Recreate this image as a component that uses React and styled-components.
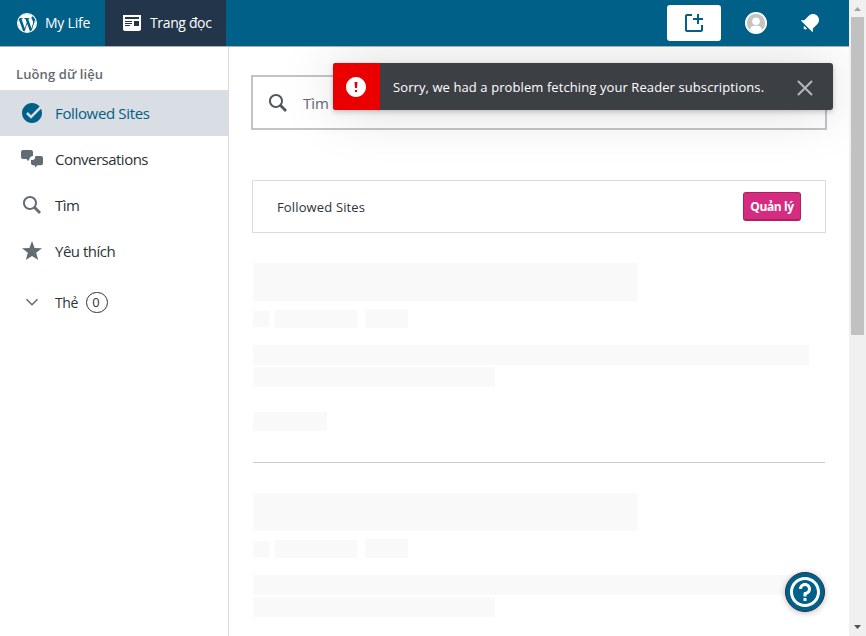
import React from 'react';
import styled, { createGlobalStyle } from 'styled-components';

const GlobalStyle = createGlobalStyle`
  * { box-sizing: border-box; }
  body {
    margin: 0;
    overflow: hidden;
    background: #fff;
    color: #2c3338;
    font-family: "Open Sans", "Noto Sans", sans-serif;
  }
`;

const Window = styled.div`
  position: relative;
  display: flex;
  width: 866px;
  height: 636px;
  overflow: hidden;
`;

const Page = styled.div`
  display: flex;
  flex-direction: column;
  width: 849px;
  height: 636px;
`;

const Masterbar = styled.header`
  position: relative;
  z-index: 3;
  display: flex;
  flex: none;
  height: 47px;
  background: #016087;
  border-bottom: 1px solid #a5afb5;
`;

const MasterItem = styled.a`
  display: flex;
  align-items: center;
  width: ${(p) => p.$width}px;
  padding-left: 15px;
  gap: 6px;
  color: #fff;
  background: ${(p) => (p.$active ? '#23354b' : 'transparent')};
`;

const Actions = styled.div`
  display: flex;
  align-items: center;
  margin-left: auto;
  padding-right: 27px;
  color: #fff;
`;

const CreateButton = styled.button`
  display: flex;
  align-items: center;
  justify-content: center;
  width: 54px;
  height: 36px;
  margin-right: 24px;
  padding: 0;
  border: 0;
  border-radius: 3px;
  background: #fff;
  color: #016087;
`;

const Avatar = styled.svg`
  width: 22px;
  height: 22px;
  margin-right: 31px;
`;

const Label = styled.span`
  font-size: ${(p) => p.$size || 14}px;
  font-weight: ${(p) => p.$weight || 400};
  letter-spacing: ${(p) => p.$track || 0}px;
  line-height: 20px;
  white-space: nowrap;
`;

const Body = styled.div`
  display: flex;
  flex: 1;
  min-height: 0;
`;

const Sidebar = styled.nav`
  display: flex;
  flex-direction: column;
  width: 229px;
  border-right: 1px solid #dcdcde;
`;

const SidebarHeading = styled.h2`
  display: flex;
  align-items: center;
  height: 43px;
  margin: 0;
  padding: 11px 0 0 16px;
  color: #646970;
`;

const NavItem = styled.a`
  display: flex;
  align-items: center;
  gap: 11px;
  height: 46px;
  padding-left: 20px;
  background: ${(p) => (p.$selected ? '#d9dde4' : 'transparent')};
  color: ${(p) => (p.$selected ? '#016087' : '#2c3338')};

  svg { color: ${(p) => (p.$selected ? '#016087' : '#626c75')}; }
`;

const TagsItem = styled(NavItem)`
  margin-top: 5px;

  svg { margin: 0 3px; }
  ${Label} { padding-top: 1px; }
`;

const Count = styled.span`
  width: 22px;
  height: 21px;
  margin-left: -3px;
  padding-right: 2px;
  border: 1px solid #2c3338;
  border-radius: 11px;
  font-size: 13px;
  line-height: 19px;
  text-align: center;
`;

const Main = styled.main`
  display: flex;
  flex: 1;
  flex-direction: column;
  padding: 28px 22px 0;
`;

const SearchBox = styled.div`
  display: flex;
  flex: none;
  align-items: center;
  gap: 13px;
  height: 55px;
  padding-left: 13px;
  border: 2px solid #c3c4c7;
  background: #fff;
  color: #50575e;

  ${Label} { color: #646970; }
`;

const SitesCard = styled.section`
  display: flex;
  flex: none;
  align-items: center;
  justify-content: space-between;
  height: 53px;
  margin: 50px 1px 30px;
  padding: 0 24px;
  border: 1px solid #dcdcde;
`;

const ManageButton = styled.button`
  width: 58px;
  height: 29px;
  padding: 2px 0 0;
  border: 1px solid #ab235a;
  border-bottom-width: 2px;
  border-radius: 3px;
  background: #d52c82;
  color: #fff;
  font-family: inherit;
`;

const Post = styled.article`
  display: flex;
  flex: none;
  flex-direction: column;
  height: 200px;
  margin: 0 2px 30px;
  border-bottom: 1px solid #ccc;
`;

const Bone = styled.div`
  flex: none;
  width: ${(p) => p.$w}px;
  height: ${(p) => p.$h}px;
  background: #f9f9f9;
`;

const Byline = styled.div`
  display: flex;
  align-items: flex-end;
  height: 19px;
  margin: 8px 0 17px;

  ${Bone}:nth-child(1) { margin: 0 6px 1px 0; }
  ${Bone}:nth-child(2) { margin-right: 8px; }
`;

const Excerpt = styled.div`
  display: flex;
  flex-direction: column;
  gap: 2px;
  margin-bottom: 25px;
`;

const Notice = styled.div`
  position: absolute;
  z-index: 2;
  top: 63px;
  left: 333px;
  display: flex;
  align-items: center;
  width: 500px;
  height: 47px;
  overflow: hidden;
  border-radius: 3px;
  background: #3c4045;
  color: #fff;
  box-shadow: 0 2px 5px rgba(0, 0, 0, 0.2), 0 0 56px rgba(0, 0, 0, 0.15);
`;

const NoticeStatus = styled.div`
  display: flex;
  align-items: center;
  width: 47px;
  height: 47px;
  margin-right: 13px;
  padding-left: 11px;
  background: #eb0001;
`;

const Dismiss = styled.button`
  display: flex;
  margin: 3px 16px 0 auto;
  padding: 0;
  border: 0;
  background: none;
  color: #b4b7ba;
`;

const HelpButton = styled.button`
  position: absolute;
  z-index: 2;
  top: 572px;
  left: 785px;
  display: flex;
  align-items: center;
  justify-content: center;
  width: 40px;
  height: 40px;
  padding: 0;
  border: 1px solid #23354b;
  border-radius: 50%;
  background: #016087;
  color: #fff;
  box-shadow: 0 1px 6px rgba(0, 0, 0, 0.25);
`;

const Scrollbar = styled.div`
  position: relative;
  z-index: 3;
  display: flex;
  flex-direction: column;
  align-items: center;
  justify-content: space-between;
  width: 17px;
  height: 636px;
  background: #f0f0f0;
`;

const Thumb = styled.div`
  width: 13px;
  height: 318px;
  margin-bottom: auto;
  background: #c1c1c1;
`;

const ScrollArrow = styled.svg`
  display: block;
  width: 17px;
  height: 17px;
  fill: ${(p) => p.$tone};
`;

const paths = {
  wordpress:
    'M12.158 12.786L9.46 20.625c.806.237 1.657.366 2.54.366 1.047 0 2.051-.18 2.986-.51-.024-.038-.046-.079-.065-.124l-2.763-7.571zM3.009 12c0 3.559 2.068 6.634 5.067 8.092L3.788 8.341C3.289 9.459 3.009 10.696 3.009 12zm15.06-.454c0-1.112-.399-1.881-.741-2.48-.456-.741-.883-1.368-.883-2.109 0-.826.627-1.596 1.51-1.596.04 0 .078.005.116.007C16.472 3.904 14.34 3.009 12 3.009c-3.141 0-5.904 1.612-7.512 4.052.211.007.41.011.579.011.94 0 2.396-.114 2.396-.114.484-.028.541.684.057.741 0 0-.487.057-1.029.085l3.274 9.739 1.968-5.901-1.401-3.838c-.484-.028-.943-.085-.943-.085-.485-.029-.428-.769.057-.741 0 0 1.484.114 2.368.114.94 0 2.397-.114 2.397-.114.485-.028.542.684.057.741 0 0-.488.057-1.029.085l3.249 9.665.897-2.996c.456-1.169.684-2.137.684-2.907zm1.82-3.86c.039.286.06.593.06.924 0 .912-.171 1.938-.684 3.22l-2.746 7.94c2.673-1.558 4.47-4.454 4.47-7.771 0-1.563-.399-3.033-1.1-4.313z',
  reader:
    'M3 4v14c0 1.1.9 2 2 2h14c1.1 0 2-.9 2-2V4H3zm7 11H5v-1h5v1zm2-2H5v-1h7v1zm0-2H5v-1h7v1zm7 4h-5v-5h5v5zm0-7H5V6h14v2z',
  create:
    'M21 14v5c0 1.105-.895 2-2 2H5c-1.105 0-2-.895-2-2V5c0-1.105.895-2 2-2h5v2H5v14h14v-5h2zM21 7h-4V3h-2v4h-4v2h4v4h2V9h4V7z',
  bell:
    'M6.14 14.97l2.828 2.827c-.362.362-.862.586-1.414.586-1.105 0-2-.895-2-2 0-.552.224-1.052.586-1.414zm8.867 5.324L14.3 21 3 9.7l.706-.707 1.102.157c.754.108 1.69-.122 2.077-.51l3.885-3.884c2.34-2.34 6.135-2.34 8.475 0s2.34 6.135 0 8.475l-3.885 3.886c-.388.388-.618 1.323-.51 2.077l.157 1.1z',
  check:
    'M11 17.768l-4.884-4.884 1.768-1.768L11 14.232l8.658-8.658C17.823 3.391 15.075 2 12 2 6.477 2 2 6.477 2 12s4.477 10 10 10 10-4.477 10-10c0-1.528-.353-2.974-.966-4.266L11 17.768z',
  chat:
    'M3 3h8a2 2 0 0 1 2 2v3.300c0 .3 0 .5-.1.700-1.900.3-3.100 1.300-3.500 3L8 14.300 6.700 12H3a2 2 0 0 1-2-2V5a2 2 0 0 1 2-2zM15.200 9H21a2 2 0 0 1 2 2v5.300a2 2 0 0 1-2 2h-3.700l-1.800 2.200-1-2.200H13a2 2 0 0 1-2-2V13h1.200c1.800 0 3-1.200 3-3z',
  search:
    'M21 19l-5.154-5.154C16.574 12.742 17 11.42 17 10c0-3.866-3.134-7-7-7s-7 3.134-7 7 3.134 7 7 7c1.42 0 2.742-.426 3.846-1.154L19 21l2-2zM5 10c0-2.757 2.243-5 5-5s5 2.243 5 5-2.243 5-5 5-5-2.243-5-5z',
  star: 'M12 2l2.582 6.953L22 9.257l-5.822 4.602L18.18 21 12 16.89 5.82 21l2.002-7.14L2 9.256l7.418-.304z',
  chevron: 'M20 9l-8 8-8-8 1.414-1.414L12 14.172l6.586-6.586z',
  notice:
    'M12 2C6.477 2 2 6.477 2 12s4.477 10 10 10 10-4.477 10-10S17.523 2 12 2zm1 15h-2v-2h2v2zm0-4h-2l-.5-6h3l-.5 6z',
  cross:
    'M18.36 19.78L12 13.41l-6.36 6.37-1.42-1.42L10.59 12 4.22 5.64l1.42-1.42L12 10.59l6.36-6.36 1.41 1.41L13.41 12l6.36 6.36z',
  help:
    'M12 4c4.411 0 8 3.589 8 8s-3.589 8-8 8-8-3.589-8-8 3.589-8 8-8m0-2C6.477 2 2 6.477 2 12s4.477 10 10 10 10-4.477 10-10S17.523 2 12 2zm4 8c0-2.21-1.79-4-4-4s-4 1.79-4 4h2c0-1.103.897-2 2-2s2 .897 2 2-.897 2-2 2c-.552 0-1 .448-1 1v2h2v-1.14c1.722-.447 3-1.998 3-3.86zm-3 6h-2v2h2v-2z',
};

const IconSvg = styled.svg`
  flex: none;
  fill: currentColor;
`;

function Icon({ name, size = 24, children }) {
  return (
    <IconSvg width={size} height={size} viewBox="0 0 24 24" aria-hidden="true">
      <path d={paths[name]} />
      {children}
    </IconSvg>
  );
}

const navItems = [
  { icon: 'check', text: 'Followed Sites', selected: true, track: -0.35 },
  { icon: 'chat', text: 'Conversations', track: -0.52 },
  { icon: 'search', text: 'Tìm', track: -0.5 },
  { icon: 'star', text: 'Yêu thích', track: -0.5 },
];

function PostPlaceholder() {
  return (
    <Post>
      <Bone $w={384} $h={38} />
      <Byline>
        <Bone $w={16} $h={16} />
        <Bone $w={82} $h={18} />
        <Bone $w={43} $h={19} />
      </Byline>
      <Excerpt>
        <Bone $w={556} $h={20} />
        <Bone $w={242} $h={20} />
      </Excerpt>
      <Bone $w={74} $h={19} />
    </Post>
  );
}

export default function App() {
  return (
    <Window>
      <GlobalStyle />
      <Page>
        <Masterbar>
          <MasterItem $width={105}>
            <Icon name="wordpress">
              <circle cx="12" cy="12" r="9.5" fill="none" stroke="currentColor" strokeWidth="1.1" />
            </Icon>
            <Label $track={-0.22}>My Life</Label>
          </MasterItem>
          <MasterItem $width={121} $active>
            <Icon name="reader" />
            <Label $track={-0.36}>Trang đọc</Label>
          </MasterItem>
          <Actions>
            <CreateButton aria-label="Write">
              <Icon name="create" />
            </CreateButton>
            <Avatar viewBox="0 0 22 22">
              <circle cx="11" cy="11" r="11" fill="#fff" />
              <circle cx="11" cy="11" r="9.200" fill="#c4c4c4" />
              <circle cx="11" cy="9.200" r="3.800" fill="#fff" />
              <path d="M5 18c.3-2.600 1.700-3.900 4-4.300h4c2.300.4 3.700 1.700 4 4.300C15.500 19.500 13.500 20.500 11 20.500S6.500 19.500 5 18z" fill="#fff" />
            </Avatar>
            <Icon name="bell" />
          </Actions>
        </Masterbar>
        <Body>
          <Sidebar>
            <SidebarHeading>
              <Label $size={13} $weight={600} $track={0.1}>Luồng dữ liệu</Label>
            </SidebarHeading>
            {navItems.map((item) => (
              <NavItem key={item.text} $selected={item.selected}>
                <Icon name={item.icon} />
                <Label $size={15} $track={item.track}>{item.text}</Label>
              </NavItem>
            ))}
            <TagsItem>
              <Icon name="chevron" size={18} />
              <Label $track={-0.4}>Thẻ</Label>
              <Count>0</Count>
            </TagsItem>
          </Sidebar>
          <Main>
            <SearchBox>
              <Icon name="search" />
              <Label $size={15}>Tìm</Label>
            </SearchBox>
            <SitesCard>
              <Label $size={13} $track={0.14}>Followed Sites</Label>
              <ManageButton>
                <Label $size={12} $weight={700} $track={-0.4}>Quản lý</Label>
              </ManageButton>
            </SitesCard>
            <PostPlaceholder />
            <PostPlaceholder />
          </Main>
        </Body>
      </Page>
      <Scrollbar>
        <ScrollArrow viewBox="0 0 17 17" $tone="#a3a3a3">
          <path d="M5 11h7L8.500 7z" />
        </ScrollArrow>
        <Thumb />
        <ScrollArrow viewBox="0 0 17 17" $tone="#505050">
          <path d="M5 6h7L8.500 10z" />
        </ScrollArrow>
      </Scrollbar>
      <Notice>
        <NoticeStatus>
          <Icon name="notice" />
        </NoticeStatus>
        <Label $size={13} $track={0.09}>Sorry, we had a problem fetching your Reader subscriptions.</Label>
        <Dismiss aria-label="Dismiss">
          <Icon name="cross" />
        </Dismiss>
      </Notice>
      <HelpButton aria-label="Help">
        <Icon name="help" size={36} />
      </HelpButton>
    </Window>
  );
}
